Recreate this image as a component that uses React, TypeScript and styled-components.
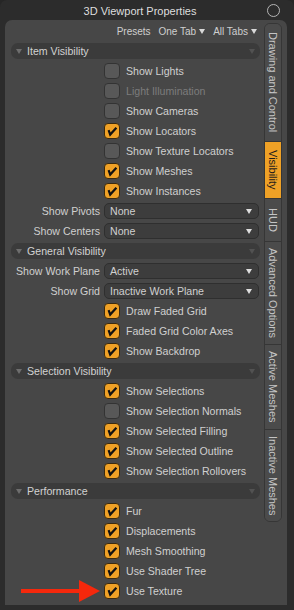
import React from "react";
import styled, { createGlobalStyle } from "styled-components";

const Global = createGlobalStyle`
  html, body { margin: 0; padding: 0; background: #262626; }
  body { font-family: "Liberation Sans", Arial, sans-serif; font-size: 10.6px; }
  * { box-sizing: border-box; }
`;

const Window = styled.div`
  position: relative;
  width: 294px;
  height: 610px;
  background: #2c2c2c;
  border-radius: 7px 7px 0 0;
  display: flex;
  flex-direction: column;
  overflow: hidden;
`;

const TitleBar = styled.div`
  height: 20px;
  display: grid;
  grid-template-columns: 1fr auto 1fr;
  align-items: center;
  color: #dedede;
  font-size: 11px;
  padding-right: 14px;
`;

const TitleText = styled.span`
  grid-column: 2;
  padding-top: 1px;
`;

const CloseRing = styled.span`
  grid-column: 3;
  justify-self: end;
  width: 13px;
  height: 13px;
  border-radius: 50%;
  border: 1.5px solid #b4b4b4;
  margin-top: 1px;
`;

const Panel = styled.div`
  margin: 0 7px 5px 5px;
  flex: 1;
  background: #474747;
  border-radius: 7px 7px 0 0;
  display: flex;
`;

const Content = styled.div`
  width: 259px;
  padding: 0 4px 0 6px;
  display: flex;
  flex-direction: column;
`;

const PresetsRow = styled.div`
  height: 21px;
  display: flex;
  justify-content: flex-end;
  align-items: center;
  gap: 8px;
  padding-right: 3px;
  padding-top: 2px;
  color: #cfcfcf;
  font-size: 10px;
`;

const PresetItem = styled.span`
  display: flex;
  align-items: center;
  gap: 3px;
`;

const SmallTri = styled.span<{ $color?: string }>`
  width: 0;
  height: 0;
  border-left: 3.5px solid transparent;
  border-right: 3.5px solid transparent;
  border-top: 5px solid ${(p) => p.$color || "#d8d8d8"};
`;

const HeaderRow = styled.div`
  height: 20px;
  display: flex;
  align-items: center;
`;

const HeaderBar = styled.div`
  flex: 1;
  height: 16px;
  border-radius: 7px;
  background: #3b3b3b;
  display: flex;
  align-items: center;
  padding: 0 5px 0 5px;
  color: #d2d2d2;
  gap: 5px;
`;

const HeaderLabel = styled.span`
  flex: 1;
`;

const Row = styled.div`
  height: 20px;
  display: grid;
  grid-template-columns: 89px 1fr;
  column-gap: 4px;
  align-items: center;
`;

const RowLabel = styled.span`
  text-align: right;
  color: #cfcfcf;
  white-space: nowrap;
`;

const CheckWrap = styled.div`
  grid-column: 2;
  display: flex;
  align-items: center;
  gap: 6px;
`;

const Box = styled.span<{ $on: boolean }>`
  width: 16px;
  height: 16px;
  border-radius: 4px;
  border: 1px solid ${(p) => (p.$on ? "#3a2a10" : "#333333")};
  background: ${(p) => (p.$on ? "#efa126" : "#585858")};
  display: flex;
  align-items: center;
  justify-content: center;
`;

const CheckText = styled.span<{ $disabled?: boolean }>`
  color: ${(p) => (p.$disabled ? "#7c7c7c" : "#d0d0d0")};
  white-space: nowrap;
`;

const Dropdown = styled.div`
  grid-column: 2;
  height: 16px;
  margin-right: 1px;
  border-radius: 5px;
  border: 1px solid #2f2f2f;
  background: #3d3d3d;
  display: flex;
  align-items: center;
  justify-content: space-between;
  padding: 0 6px 0 5px;
  color: #d0d0d0;
`;

const TabColumn = styled.div`
  margin-top: 3px;
  width: 18px;
  align-self: flex-start;
  display: flex;
  flex-direction: column;
  border: 1px solid #363636;
  border-radius: 6px;
  overflow: hidden;
  background: #4b4b4b;
  font-size: 11px;
`;

const Tab = styled.div<{ $h: number; $active?: boolean }>`
  height: ${(p) => p.$h}px;
  writing-mode: vertical-rl;
  display: flex;
  align-items: center;
  justify-content: center;
  background: ${(p) => (p.$active ? "#efa126" : "#4b4b4b")};
  color: ${(p) => (p.$active ? "#1c1c1c" : "#c4c4c4")};
  border-top: 1px solid #363636;
  &:first-child { border-top: none; }
  white-space: nowrap;
`;

const Arrow = styled.svg`
  position: absolute;
  left: 21px;
  top: 580px;
`;

const Check = () => (
  <svg width="12" height="12" viewBox="0 0 12 12">
    <path d="M2.6 5.2 L4.2 9.6 L10.4 2.8" fill="none" stroke="#111" strokeWidth="2.2" strokeLinejoin="miter" />
  </svg>
);

const CheckRow = ({ label, on, disabled }: { label: string; on?: boolean; disabled?: boolean }) => (
  <Row>
    <CheckWrap>
      <Box $on={!!on}>{on && <Check />}</Box>
      <CheckText $disabled={disabled}>{label}</CheckText>
    </CheckWrap>
  </Row>
);

const SelectRow = ({ label, value }: { label: string; value: string }) => (
  <Row>
    <RowLabel>{label}</RowLabel>
    <Dropdown>
      <span>{value}</span>
      <SmallTri $color="#dedede" />
    </Dropdown>
  </Row>
);

const Header = ({ label }: { label: string }) => (
  <HeaderRow>
    <HeaderBar>
      <SmallTri $color="#6e6e6e" />
      <HeaderLabel>{label}</HeaderLabel>
      <SmallTri $color="#525252" />
    </HeaderBar>
  </HeaderRow>
);

const tabs: { label: string; h: number; active?: boolean }[] = [
  { label: "Drawing and Control", h: 117 },
  { label: "Visibility", h: 57, active: true },
  { label: "HUD", h: 43 },
  { label: "Advanced Options", h: 103 },
  { label: "Active Meshes", h: 85 },
  { label: "Inactive Meshes", h: 92 },
];

export default function App() {
  return (
    <>
      <Global />
      <Window>
        <TitleBar>
          <TitleText>3D Viewport Properties</TitleText>
          <CloseRing />
        </TitleBar>
        <Panel>
          <Content>
            <PresetsRow>
              <PresetItem>Presets</PresetItem>
              <PresetItem>One Tab <SmallTri /></PresetItem>
              <PresetItem>All Tabs <SmallTri /></PresetItem>
            </PresetsRow>
            <Header label="Item Visibility" />
            <CheckRow label="Show Lights" />
            <CheckRow label="Light Illumination" disabled />
            <CheckRow label="Show Cameras" />
            <CheckRow label="Show Locators" on />
            <CheckRow label="Show Texture Locators" />
            <CheckRow label="Show Meshes" on />
            <CheckRow label="Show Instances" on />
            <SelectRow label="Show Pivots" value="None" />
            <SelectRow label="Show Centers" value="None" />
            <Header label="General Visibility" />
            <SelectRow label="Show Work Plane" value="Active" />
            <SelectRow label="Show Grid" value="Inactive Work Plane" />
            <CheckRow label="Draw Faded Grid" on />
            <CheckRow label="Faded Grid Color Axes" on />
            <CheckRow label="Show Backdrop" on />
            <Header label="Selection Visibility" />
            <CheckRow label="Show Selections" on />
            <CheckRow label="Show Selection Normals" />
            <CheckRow label="Show Selected Filling" on />
            <CheckRow label="Show Selected Outline" on />
            <CheckRow label="Show Selection Rollovers" on />
            <Header label="Performance" />
            <CheckRow label="Fur" on />
            <CheckRow label="Displacements" on />
            <CheckRow label="Mesh Smoothing" on />
            <CheckRow label="Use Shader Tree" on />
            <CheckRow label="Use Texture" on />
          </Content>
          <TabColumn>
            {tabs.map((t) => (
              <Tab key={t.label} $h={t.h} $active={t.active}>
                {t.label}
              </Tab>
            ))}
          </TabColumn>
        </Panel>
        <Arrow width="80" height="22" viewBox="0 0 80 22">
          <rect x="0" y="9" width="62" height="4" fill="#f5280c" />
          <polygon points="58,0 79,11 58,22" fill="#f5280c" />
        </Arrow>
      </Window>
    </>
  );
}
